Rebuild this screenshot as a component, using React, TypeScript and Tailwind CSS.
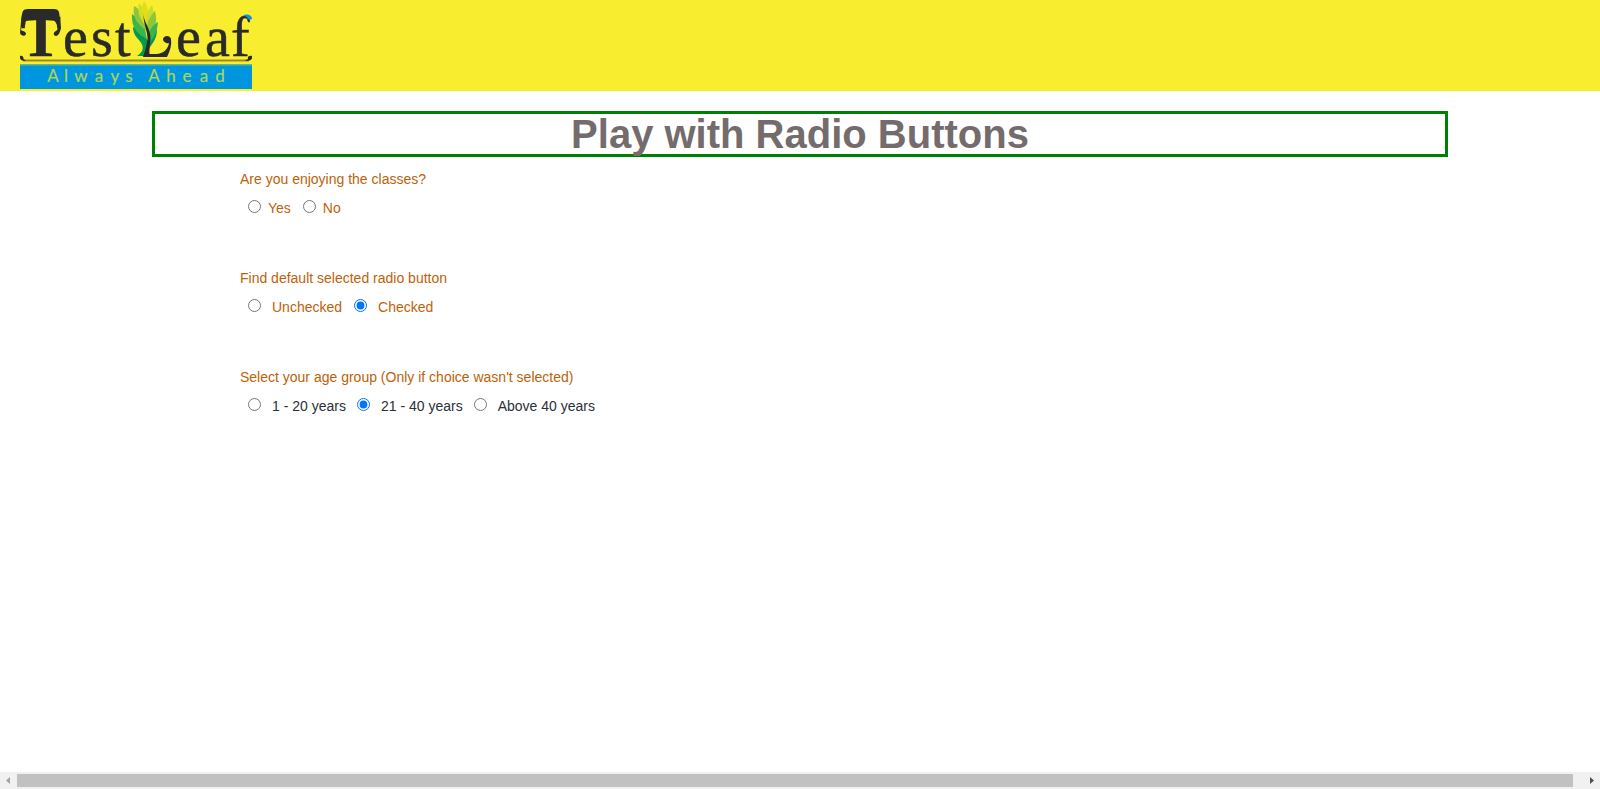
import React from "react";

type Choice = { label: string; checked?: boolean };

type Group = {
  name: string;
  question: string;
  choices: Choice[];
  rowStyle: string;
  choiceStyle: string;
};

const groups: Group[] = [
  {
    name: "enjoying",
    question: "Are you enjoying the classes?",
    choices: [{ label: "Yes" }, { label: "No" }],
    rowStyle: "gap-3 text-[#c05f08]",
    choiceStyle: "gap-[7px]",
  },
  {
    name: "default",
    question: "Find default selected radio button",
    choices: [{ label: "Unchecked" }, { label: "Checked", checked: true }],
    rowStyle: "gap-3 text-[#c05f08]",
    choiceStyle: "gap-[11px]",
  },
  {
    name: "age",
    question: "Select your age group (Only if choice wasn't selected)",
    choices: [
      { label: "1 - 20 years" },
      { label: "21 - 40 years", checked: true },
      { label: "Above 40 years" },
    ],
    rowStyle: "gap-[11px] text-[#2b2f38]",
    choiceStyle: "gap-[11px]",
  },
];

function Logo() {
  return (
    <svg width="232" height="89" viewBox="20 0 232 89" role="img" aria-label="TestLeaf - Always Ahead">
      <g fill="#2a2a28" stroke="#2a2a28" strokeWidth="0.5" fontFamily="'Liberation Serif', serif" fontSize="56">
        <text x="41" y="56" fontSize="60" fontWeight="700" textAnchor="middle">T</text>
        <text x="63" y="56">e</text>
        <text x="91" y="56">s</text>
        <text x="115" y="56">t</text>
        <text x="176" y="56">e</text>
        <text x="205" y="56">a</text>
        <text x="231" y="56">f</text>
      </g>
      {/* Flourish over the T */}
      <g fill="#2a2a28">
        <path d="M20 33 C21 25 21 15 23 11 Q24 9 28 9 H54 Q58 9 59 12 C60 17 60 23 61 28 C60 33 58 36 56 36 C53 36 53 32 56 31 C60 29 57 20 49 18 H33 C26 19 22 24 21 30 C22 31 26 31 26 34 C25 37 21 36 20 33Z" />
      </g>
      {/* Leaf */}
      <path d="M137 56 C145 51 144 45 138 39 C134 35 133 31 133 27 C141 29 145 34 148 42 C151 35 155 32 157 29 C157 40 152 43 149 49 L149 56Z" fill="#009b4c" />
      <path d="M132 14 C137 18 143 20 145 29 L147 39 C140 35 131 30 132 14Z" fill="#39b54a" />
      <path d="M134 6 C141 10 145 16 146 30 C138 25 132 18 134 6Z" fill="#8cc63f" />
      <path d="M139 3 C145 9 147 16 145 25 C140 19 137 12 139 3Z" fill="#d3dd22" />
      <path d="M144 1 C150 9 149 19 146 27 C142 19 140 9 144 1Z" fill="#e1df17" />
      <path d="M152 5 C155 14 154 24 147 30 C145 18 148 10 152 5Z" fill="#cbdc29" />
      <path d="M155 11 C158 22 155 31 148 37 C145 25 149 17 155 11Z" fill="#8cc63f" />
      <path d="M158 22 C157 34 153 39 149 43 C147 33 151 26 158 22Z" fill="#39b54a" />
      {/* Curved stem that sweeps into the wordmark */}
      <path
        d="M143.500 13 C143 22 151 28 150.500 39 C150 45 149 50 149.500 54 H157 C164 53 168 49 169 43 C167 44 163 42 163 39 C164 35 170 35 171 39 C172 45 170 51 167 57 H143 C145 51 147 45 147.500 38 C147.500 31 143 23 143.500 13Z"
        fill="#2a2a28"
      />
      {/* Blue tip of the f */}
      <path d="M243 15.500 C247 13.500 252 15 252 19 C250 20.500 247 19 247 17Z" fill="#0a93ee" />
      {/* Rule with curled ends */}
      <path d="M23 60.500 H249" stroke="#9b8a26" strokeWidth="2" />
      <path d="M20 56 C21 55 24 56 23.500 59 L26 60.500 C23 61.500 20 60 20 58Z M252 56 C250 55 247 56 248 59 L245 60.500 C249 61.500 252 60 252 58Z" fill="#2a2a28" />
      <rect x="20" y="64" width="232" height="2" fill="#65b97c" />
      <rect x="20" y="65.500" width="232" height="23.500" fill="#0095df" />
      <g fill="#a9d957" stroke="#a9d957" strokeWidth="0.2" fontFamily="Lato, sans-serif" fontSize="17" textAnchor="middle">
        <text x="53" y="82">A</text>
        <text x="66" y="82">l</text>
        <text x="81" y="82">w</text>
        <text x="99" y="82">a</text>
        <text x="115" y="82">y</text>
        <text x="129" y="82">s</text>
        <text x="154" y="82">A</text>
        <text x="171" y="82">h</text>
        <text x="187" y="82">e</text>
        <text x="204" y="82">a</text>
        <text x="220" y="82">d</text>
      </g>
    </svg>
  );
}

function RadioGroup({ name, question, choices, rowStyle, choiceStyle }: Group) {
  return (
    <fieldset className="mb-[50px]">
      <legend className="mb-[9px] text-[#c05f08]">{question}</legend>
      <div className={`flex pl-2 ${rowStyle}`}>
        {choices.map((choice) => (
          <label key={choice.label} className={`flex items-start ${choiceStyle}`}>
            <input type="radio" name={name} defaultChecked={choice.checked} className="mt-0.5 size-[13px]" />
            {choice.label}
          </label>
        ))}
      </div>
    </fieldset>
  );
}

function ScrollBar() {
  return (
    <div className="flex h-[17px] items-center bg-[#f1f1f1]" aria-hidden="true">
      <svg width="17" height="17" viewBox="0 0 17 17">
        <path d="M10 5 V12 L6 8.500Z" fill="#a3a3a3" />
      </svg>
      <div className="mr-2.5 h-[13px] grow bg-[#c1c1c1]" />
      <svg width="17" height="17" viewBox="0 0 17 17">
        <path d="M7 5 V12 L11 8.500Z" fill="#505050" />
      </svg>
    </div>
  );
}

export default function App() {
  return (
    <div className="flex min-h-screen flex-col bg-white font-['Liberation_Sans',Arial,sans-serif] text-sm">
      <header className="h-[91px] bg-[#f8ee2f] px-5">
        <a href="#" className="inline-block">
          <Logo />
        </a>
      </header>
      <main className="grow pt-5">
        <h1 className="mx-auto w-[81%] border-3 border-[#008000] text-center text-[40px] leading-10 font-bold text-[#746c6c]">
          Play with Radio Buttons
        </h1>
        <form className="mx-[15%] pt-3">
          {groups.map((group) => (
            <RadioGroup key={group.name} {...group} />
          ))}
        </form>
      </main>
      <ScrollBar />
    </div>
  );
}
